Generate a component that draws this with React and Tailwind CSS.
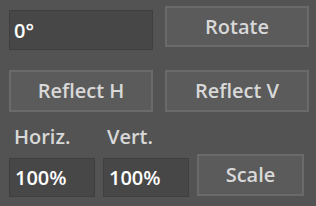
export default function App() {
  const inputCls =
    'bg-[#474747] border border-[#3f3f3f] text-white text-[20px] leading-none pl-[4px] outline-none';
  const btnCls =
    'bg-[#5b5b5b] border-2 border-[#6a6a6a] text-[#d8d8d8] text-[20px] leading-none flex items-center justify-center';

  return (
    <div className="w-[316px] h-[206px] bg-[#535353] font-['Open_Sans',Arial,sans-serif] font-semibold overflow-hidden">
      {/* Rotate row */}
      <div className="flex items-start pl-[9px]">
        <input
          defaultValue="0°"
          className={`${inputCls} mt-[10px] w-[144px] h-[40px]`}
        />
        <button className={`${btnCls} ml-[12px] mt-[6px] w-[144px] h-[41px]`}>Rotate</button>
      </div>

      {/* Reflect row */}
      <div className="flex pl-[9px] mt-[20px] gap-[12px]">
        <button className={`${btnCls} w-[144px] h-[42px]`}>Reflect H</button>
        <button className={`${btnCls} w-[144px] h-[42px]`}>Reflect V</button>
      </div>

      {/* Scale labels */}
      <div className="flex pl-[14px] mt-[13px] text-[20px] leading-[24px] text-[#d8d8d8]">
        <span className="w-[93px]">Horiz.</span>
        <span>Vert.</span>
      </div>

      {/* Scale row */}
      <div className="flex items-start pl-[9px] mt-[5px]">
        <input
          defaultValue="100%"
          className={`${inputCls} mt-[4px] w-[86px] h-[39px] pl-[5px]`}
        />
        <input
          defaultValue="100%"
          className={`${inputCls} ml-[8px] mt-[4px] w-[86px] h-[39px] pl-[5px]`}
        />
        <button className={`${btnCls} ml-[8px] w-[107px] h-[42px]`}>Scale</button>
      </div>
    </div>
  );
}
